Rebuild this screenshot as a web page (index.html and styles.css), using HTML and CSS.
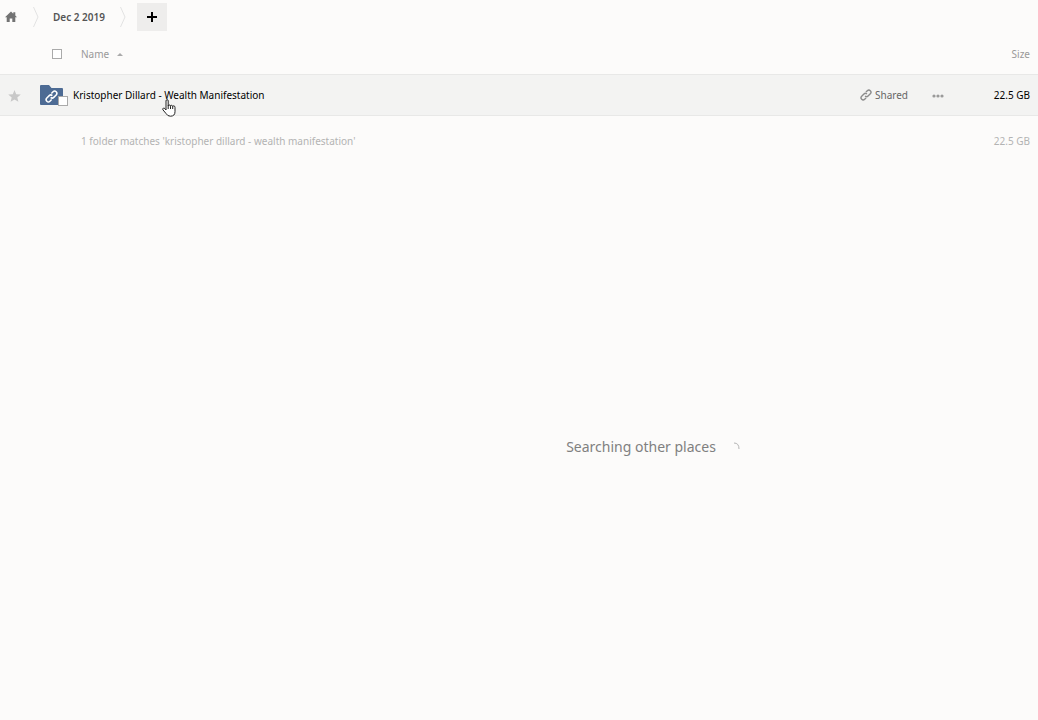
FILE: index.html
```
<!DOCTYPE html>
<html lang="en">
<head>
  <meta charset="UTF-8">
  <meta name="viewport" content="width=device-width, initial-scale=1.0">
  <title>Files</title>
  <link rel="stylesheet" href="styles.css">
</head>
<body>
  <nav class="controls" aria-label="Breadcrumb">
    <a class="crumb home" href="#" aria-label="Home">
      <svg width="12" height="12" viewBox="0 0 12 12" fill="#737373"><path d="M6 .5 0 6.3h1.7V11h3V7.5h2.6V11h3V6.3H12L10.3 4.6V1.2H8.3v1.5z"/></svg>
    </a>
    <svg class="divider" width="6" height="22" viewBox="0 0 6 22" fill="none" stroke="#e2e2e2"><path d="M.5 1 5 11 .5 21"/></svg>
    <a class="crumb folder" href="#">Dec 2 2019</a>
    <svg class="divider" width="6" height="22" viewBox="0 0 6 22" fill="none" stroke="#e2e2e2"><path d="M.5 1 5 11 .5 21"/></svg>
    <button class="new" type="button" aria-label="New">
      <svg width="12" height="12" viewBox="0 0 12 12" fill="none" stroke="#000" stroke-width="2"><path d="M6 1v10M1 6h10"/></svg>
    </button>
  </nav>

  <table class="files">
    <thead>
      <tr>
        <th class="col-star"></th>
        <th class="col-select"><input class="check" type="checkbox" aria-label="Select all"></th>
        <th class="col-name"><a class="sort" href="#">Name <span class="arrow"></span></a></th>
        <th class="col-share"></th>
        <th class="col-menu"></th>
        <th class="col-size"><a class="sort" href="#">Size</a></th>
      </tr>
    </thead>
    <tbody>
      <tr class="file">
        <td class="col-star">
          <button class="plain" type="button" aria-label="Favorite">
            <svg width="13" height="12" viewBox="0 0 13 12" fill="#c8c8c8"><path d="m6.5 0 1.7 4.2 4.6.3-3.5 2.9 1.1 4.4-3.9-2.4-3.9 2.4 1.1-4.4L.2 4.5l4.6-.3z"/></svg>
          </button>
        </td>
        <td class="col-select">
          <div class="thumb">
            <svg width="24" height="20" viewBox="0 0 24 20">
              <path d="M1 0h8l2.5 3H22q1 0 1 1v15q0 1-1 1H1q-1 0-1-1V1q0-1 1-1z" fill="#4d6b94"/>
              <g fill="none" stroke="#fff" stroke-width="1.5" transform="translate(11.5 11.5) rotate(-45)">
                <path d="M-2 2.2h-2.4a2.2 2.2 0 0 1 0-4.4h3.4a2.2 2.2 0 0 1 2.2 2.2"/>
                <path d="M2-2.2h2.4a2.2 2.2 0 0 1 0 4.4H1A2.2 2.2 0 0 1-1.2 0"/>
              </g>
            </svg>
            <input class="check" type="checkbox" aria-label="Select folder">
          </div>
        </td>
        <td class="col-name">
          <a class="filename" href="#">Kristopher Dillard - Wealth Manifestation</a>
          <svg class="pointer" width="14" height="19" viewBox="0 0 14 19" fill="#fff" stroke="#222" stroke-linejoin="round"><path d="M4 11V2q0-1.4 1.1-1.4T6.2 2v5q0-1 1.1-1t1.2 1.2q0-.9 1-.9t1.2 1.3q0-.8.9-.8 1.4 0 1.4 1.7v4.2q0 4.5-4.6 4.5-2.8 0-4.3-2.6L.9 10.8q-.6-1.2.4-1.6.9-.4 1.7.6z"/><path d="M6.2 6.5V10M8.5 7.2V10M10.7 7.6V10"/></svg>
        </td>
        <td class="col-share">
          <a class="shared" href="#">
            <svg width="12" height="12" viewBox="0 0 12 12" fill="none" stroke="#8c8c8c" stroke-width="1.4">
              <g transform="translate(6 6) rotate(-45)">
                <path d="M-2 2.1h-2a2.1 2.1 0 0 1 0-4.2h3.2a2.1 2.1 0 0 1 2.1 2.1"/>
                <path d="M2-2.1h2a2.1 2.1 0 0 1 0 4.2H.8A2.1 2.1 0 0 1-1.3 0"/>
              </g>
            </svg>
            <span>Shared</span>
          </a>
        </td>
        <td class="col-menu">
          <button class="plain" type="button" aria-label="Actions">
            <svg width="12" height="4" viewBox="0 0 12 4" fill="#9a9a9a"><circle cx="2" cy="2" r="1.6"/><circle cx="6" cy="2" r="1.6"/><circle cx="10" cy="2" r="1.6"/></svg>
          </button>
        </td>
        <td class="col-size">22.5 GB</td>
      </tr>
    </tbody>
    <tfoot>
      <tr class="summary">
        <td></td>
        <td></td>
        <td class="col-name" colspan="3">1 folder matches 'kristopher dillard - wealth manifestation'</td>
        <td class="col-size">22.5 GB</td>
      </tr>
    </tfoot>
  </table>

  <div class="search-status" role="status">
    <span>Searching other places</span>
    <svg width="10" height="10" viewBox="0 0 10 10" fill="none" stroke="#b4b4b4"><path d="M4 1q5 0 5 6"/></svg>
  </div>
</body>
</html>
```
FILE: styles.css
```
body {
  margin: 0;
  background: #fcfbfa;
  color: #000;
  font-family: "Noto Sans", "Open Sans", sans-serif;
  font-size: 10px;
  line-height: 16px;
}
a {
  color: inherit;
  text-decoration: none;
}
svg {
  display: block;
}
button {
  border: 0;
  padding: 0;
  cursor: pointer;
}
.plain {
  background: none;
  vertical-align: middle;
}

/* breadcrumb bar */
.controls {
  display: flex;
  align-items: center;
  height: 34px;
}
.home {
  padding: 0 16px 0 5px;
}
.folder {
  padding: 0 15px 0 14px;
  color: #555;
  font-weight: 600;
}
.new {
  display: flex;
  align-items: center;
  justify-content: center;
  width: 30px;
  height: 28px;
  margin-left: 11px;
  background: #eeedec;
}

/* file list */
.files {
  width: 100%;
  border-collapse: collapse;
  table-layout: fixed;
}
.files th,
.files td {
  padding: 0;
  font-weight: normal;
  text-align: left;
}
.files th {
  height: 40px;
  color: #999;
}
.files .col-star {
  width: 24px;
  padding-left: 8px;
}
.files .col-select {
  width: 41px;
}
.files .col-share {
  width: 72px;
}
.files .col-menu {
  width: 36px;
}
.files .col-size {
  width: 62px;
  padding-right: 8px;
  text-align: right;
}
.files th.col-name,
.summary .col-name {
  padding-left: 8px;
}
.check {
  display: block;
  appearance: none;
  box-sizing: border-box;
  width: 10px;
  height: 10px;
  margin: 0;
  border: 1px solid #aaa;
  background: #fff;
}
th .check {
  margin-left: 20px;
}
.arrow {
  display: inline-block;
  margin: 0 0 2px 5px;
  border: 3px solid transparent;
  border-top: 0;
  border-bottom-color: #aaa;
}
.file {
  background: #f3f3f2;
  border-top: 1px solid #e8e8e7;
  border-bottom: 1px solid #e8e8e7;
}
.file td {
  height: 40px;
}
.thumb {
  position: relative;
  width: 24px;
  margin-left: 8px;
}
.thumb .check {
  position: absolute;
  right: -4px;
  bottom: -1px;
}
.file .col-name {
  position: relative;
}
.pointer {
  position: absolute;
  left: 89px;
  top: 24px;
}
.shared {
  display: flex;
  align-items: center;
  gap: 3px;
  color: #666;
}
.summary td {
  height: 50px;
  color: #b3b3b3;
}

.search-status {
  display: flex;
  align-items: center;
  justify-content: center;
  gap: 14px;
  margin-top: 269px;
  padding-left: 268px;
  color: #808080;
  font-size: 14px;
  line-height: 24px;
}
```
